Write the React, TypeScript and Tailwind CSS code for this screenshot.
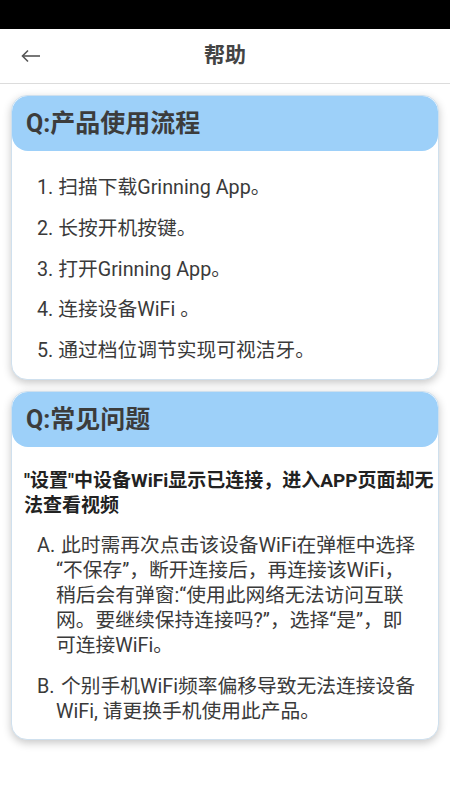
import React from "react";

const STEPS = [
  "1. 扫描下载Grinning App。",
  "2. 长按开机按键。",
  "3. 打开Grinning App。",
  "4. 连接设备WiFi 。",
  "5. 通过档位调节实现可视洁牙。",
];

// lines are broken where the app breaks them
const ANSWERS = [
  {
    tag: "A.",
    lines: [
      "此时需再次点击该设备WiFi在弹框中选择",
      "“不保存”，断开连接后，再连接该WiFi，",
      "稍后会有弹窗:“使用此网络无法访问互联",
      "网。要继续保持连接吗?”，选择“是”，即",
      "可连接WiFi。",
    ],
  },
  {
    tag: "B.",
    lines: ["个别手机WiFi频率偏移导致无法连接设备", "WiFi, 请更换手机使用此产品。"],
  },
];

function Card({ title, children }: { title: string; children: React.ReactNode }) {
  return (
    <div className="rounded-2xl border border-[#cfe0ee] bg-white shadow-[0_3px_8px_rgba(0,0,0,0.22)] overflow-hidden">
      <div className="h-[55px] bg-[#9dd0f9] rounded-2xl flex items-center px-[14px]">
        <h2 className="text-[25px] font-bold text-[#3c3c3c]">{title}</h2>
      </div>
      {children}
    </div>
  );
}

export default function App() {
  return (
    <div
      className="min-h-[800px] w-[450px] bg-white"
      style={{ fontFamily: 'Roboto, "Noto Sans CJK SC", sans-serif' }}
    >
      <div className="h-[29px] bg-black" />
      <div className="h-[55px] relative flex items-center justify-center border-b border-[#dcdcdc]">
        <button className="absolute left-[21px] top-[20px] text-[#555]">
          <svg width="20" height="14" viewBox="0 0 20 14" fill="none" stroke="currentColor" strokeWidth="1.6">
            <path d="M19 7H2" />
            <path d="M7 1.5L1.5 7L7 12.5" />
          </svg>
        </button>
        <h1 className="text-[21px] font-bold text-[#444]">帮助</h1>
      </div>

      <div className="px-[11px] pt-[11px] flex flex-col gap-[11px]">
        <Card title="Q:产品使用流程">
          <ul className="pl-[25px] pt-[24px] pb-[16px] flex flex-col gap-[15.75px]">
            {STEPS.map((s) => (
              <li key={s} className="text-[19.75px] leading-[25px] text-[#3a3a3a]">
                {s}
              </li>
            ))}
          </ul>
        </Card>

        <Card title="Q:常见问题">
          <div className="pl-[12px] pr-[8px] pt-[21px] pb-[15px]">
            <p className="text-[19px] font-bold leading-[25px] text-[#222] whitespace-nowrap">
              "设置"中设备WiFi显示已连接，进入APP页面却无
              <br />
              法查看视频
            </p>
            <div className="mt-[15px] pl-[13px] flex flex-col gap-[16px]">
              {ANSWERS.map((a) => (
                <p
                  key={a.tag}
                  className="pl-[19px] indent-[-19px] text-[19.75px] leading-[25px] text-[#3a3a3a] whitespace-nowrap"
                >
                  <span className="inline-block w-[24px] indent-0">{a.tag}</span>
                  {a.lines.map((l, i) => (
                    <React.Fragment key={i}>
                      {i > 0 && <br />}
                      {l}
                    </React.Fragment>
                  ))}
                </p>
              ))}
            </div>
          </div>
        </Card>
      </div>
    </div>
  );
}
